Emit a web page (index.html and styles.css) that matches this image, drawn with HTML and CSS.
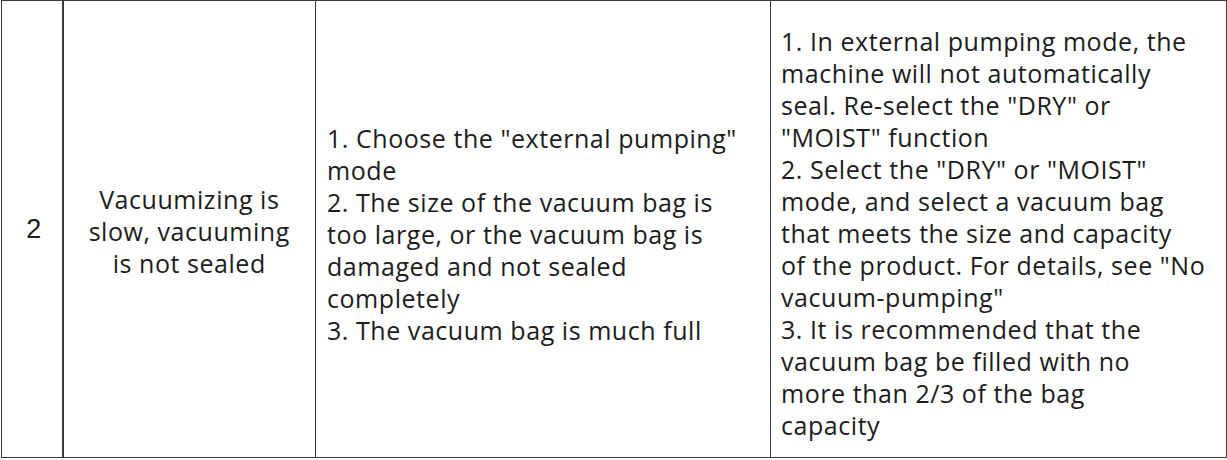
FILE: index.html
```html
<!DOCTYPE html>
<html>
<head>
<meta charset="utf-8">
<link rel="stylesheet" href="styles.css">
</head>
<body>
<table class="faq">
  <colgroup>
    <col class="c-num">
    <col class="c-problem">
    <col class="c-cause">
    <col class="c-fix">
  </colgroup>
  <tr>
    <td class="num">2</td>
    <td class="problem">Vacuumizing is<br>slow, vacuuming<br>is not sealed</td>
    <td class="text cause">1. Choose the "external pumping"<br>mode<br>2. The size of the vacuum bag is<br>too large, or the vacuum bag is<br>damaged and not sealed<br>completely<br>3. The vacuum bag is much full</td>
    <td class="text fix">1. In external pumping mode, the<br>machine will not automatically<br>seal. Re-select the "DRY" or<br>"MOIST" function<br>2. Select the "DRY" or "MOIST"<br>mode, and select a vacuum bag<br>that meets the size and capacity<br>of the product. For details, see "No<br>vacuum-pumping"<br>3. It is recommended that the<br>vacuum bag be filled with no<br>more than 2/3 of the bag<br>capacity</td>
  </tr>
</table>
</body>
</html>
```

FILE: styles.css
```css
html, body {
  margin: 0;
  padding: 0;
  background: #ffffff;
}

.faq {
  margin-left: 1px;
  width: 1225px;
  height: 458px;
  border-collapse: collapse;
  table-layout: fixed;
  font-family: "Open Sans", "DejaVu Sans", sans-serif;
  color: #1c1c1c;
}

.c-num { width: 61px; }
.c-problem { width: 253px; }
.c-cause { width: 455px; }
.c-fix { width: 456px; }

.faq td {
  border: 1px solid #3a3a3a;
  vertical-align: middle;
  padding: 10px 0 0 11px;
  font-size: 25px;
  line-height: 32px;
  letter-spacing: 0.55px;
  white-space: nowrap;
}

.faq td.num {
  border-right: 2px solid #3a3a3a;
  text-align: center;
  padding: 0 0 0 4px;
  letter-spacing: 0;
  font-family: "Liberation Sans", Arial, sans-serif;
  font-size: 27px;
}

.faq td.problem {
  text-align: center;
  padding: 4px 0 0 0;
}

.faq td.text {
  text-align: left;
}

.faq td.fix {
  padding: 8px 0 0 10px;
}
```
